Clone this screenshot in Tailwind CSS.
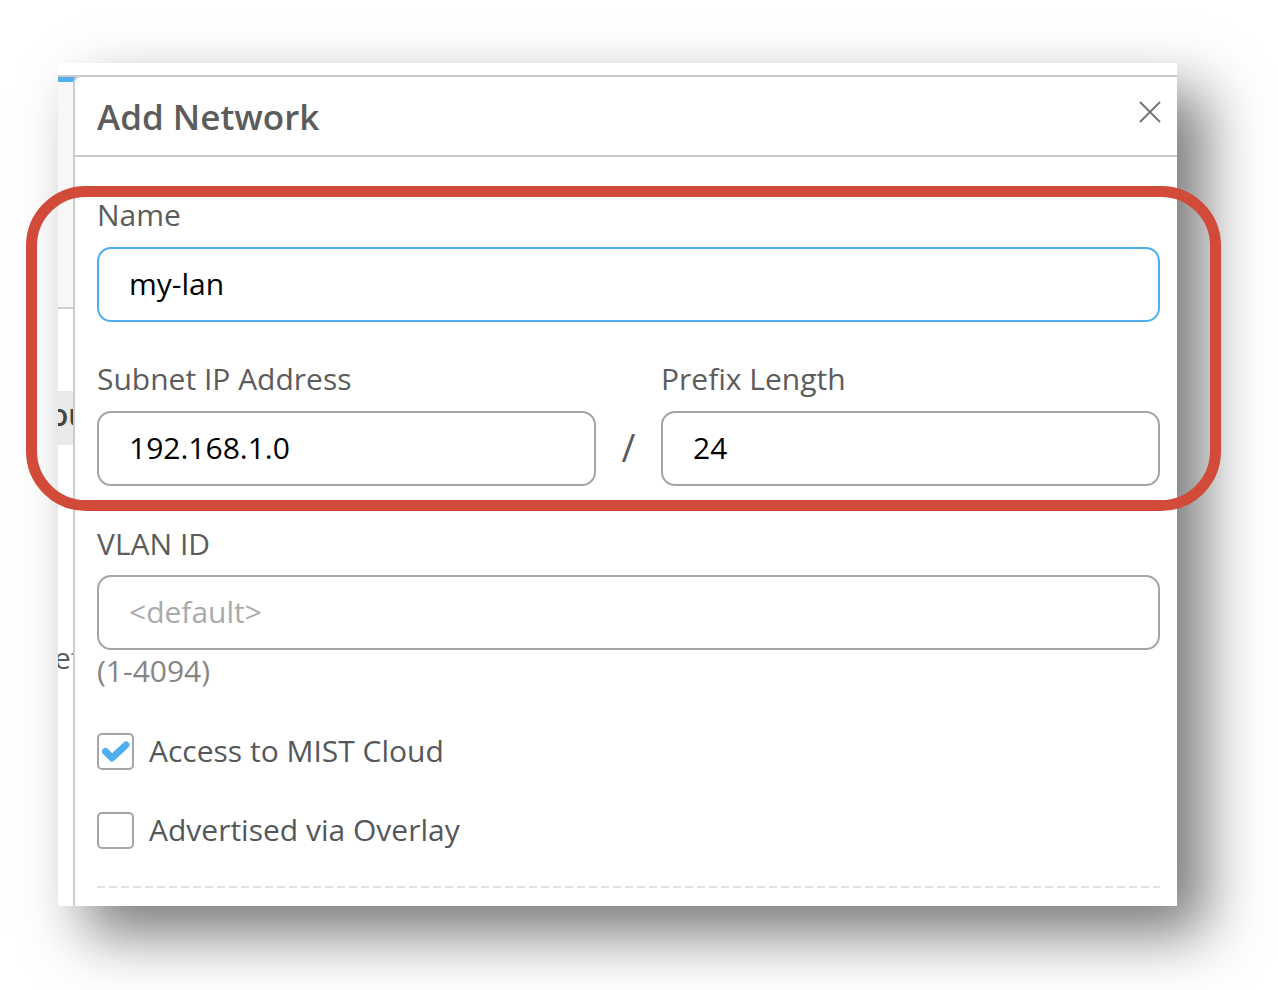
<!DOCTYPE html>
<html lang="en">
<head>
<meta charset="utf-8">
<meta name="viewport" content="width=device-width, initial-scale=1">
<title>Add Network</title>
<script src="https://cdn.jsdelivr.net/npm/@tailwindcss/browser@4"></script>
</head>
<body class="overflow-x-hidden bg-white pt-[63px] pr-[101px] pb-[84px] pl-[58px] font-['Open_Sans',sans-serif] text-[30px] leading-10 text-[#5c5c5c]">
<main class="bg-white pt-3 shadow-[28px_28px_56px_rgba(0,0,0,0.53)]">
  <div class="flex border-t-2 border-[#cccccc]">
    <!-- Edge of the page behind the dialog -->
    <div aria-hidden="true" class="-mr-[3px] flex w-[18px] shrink-0 flex-col overflow-hidden whitespace-nowrap">
      <div class="h-[230px] shrink-0 border-t-5 border-[#50aeee] bg-[#f7f7f7]"></div>
      <div class="h-0.5 shrink-0 bg-[#d0d0d0]"></div>
      <div class="mt-[82px] h-[54px] bg-[#e9e9eb] leading-[48px] font-semibold text-[#444444]"><span class="-ml-2">ou</span></div>
      <div class="mt-[193px] font-medium"><span class="-ml-1">et</span></div>
    </div>

    <section aria-labelledby="title" class="relative -mt-0.5 min-w-0 grow rounded-tl-lg border-t-2 border-l-2 border-[#cccccc] bg-white">
      <header class="flex items-center justify-between border-b-2 border-[#cccccc] pr-4 pl-[22px]">
        <h1 id="title" class="pt-5 pb-[18px] text-[35px] leading-10 font-semibold">Add Network</h1>
        <button type="button" aria-label="Close" class="mb-2 text-[#707476]">
          <svg class="size-[22px]" viewBox="0 0 22 22" fill="none" stroke="currentColor" stroke-width="1.8"><path d="M1 1 21 21M21 1 1 21"/></svg>
        </button>
      </header>

      <form class="pt-[38px] pr-[17px] pb-[18px] pl-[22px]">
        <div class="relative">
          <div class="flex flex-col gap-3">
            <label for="name">Name</label>
            <input id="name" type="text" value="my-lan" class="h-[75px] w-full rounded-[14px] border-2 border-[#50aeee] px-[30px] pb-0.5 text-black outline-none">
          </div>
          <div class="mt-[37px] flex items-end">
            <div class="flex min-w-0 flex-1 flex-col gap-3">
              <label for="subnet">Subnet IP Address</label>
              <input id="subnet" type="text" value="192.168.1.0" class="h-[75px] w-full rounded-[14px] border-2 border-[#a3a5a6] px-[30px] pb-0.5 text-black outline-none">
            </div>
            <span class="w-[65px] text-center text-[38px] leading-[78px]">/</span>
            <div class="flex min-w-0 flex-1 flex-col gap-3">
              <label for="prefix">Prefix Length</label>
              <input id="prefix" type="text" value="24" class="h-[75px] w-full rounded-[14px] border-2 border-[#a3a5a6] px-[30px] pb-0.5 text-black outline-none">
            </div>
          </div>
          <!-- Highlight around the required fields -->
          <div class="pointer-events-none absolute -top-[9px] -right-[61px] -bottom-[25px] -left-[71px] rounded-[60px] border-11 border-[#d24b3a]"></div>
        </div>

        <div class="mt-[38px] flex flex-col gap-[11px]">
          <label for="vlan">VLAN ID</label>
          <input id="vlan" type="text" placeholder="&lt;default&gt;" aria-describedby="vlan-hint" class="h-[75px] w-full rounded-[14px] border-2 border-[#a3a5a6] px-[30px] pb-0.5 text-black outline-none placeholder:text-[#a9abab]">
        </div>
        <p id="vlan-hint" class="pt-px text-[#858585]">(1-4094)</p>

        <div class="mt-10 flex flex-col gap-[39px] text-[#55585a]">
          <label class="flex items-center gap-[15px]">
            <span class="grid size-[37px] shrink-0">
              <input type="checkbox" checked class="peer col-start-1 row-start-1 appearance-none rounded-[5px] border-2 border-[#a3a5a6]">
              <svg class="pointer-events-none invisible col-start-1 row-start-1 peer-checked:visible" viewBox="0 0 37 37" fill="none" stroke="#50aeee" stroke-width="7" stroke-linecap="round" stroke-linejoin="round"><path d="M8.5 18.5 15 25 29 12"/></svg>
            </span>
            Access to MIST Cloud
          </label>
          <label class="flex items-center gap-[15px]">
            <span class="grid size-[37px] shrink-0">
              <input type="checkbox" class="peer col-start-1 row-start-1 appearance-none rounded-[5px] border-2 border-[#a3a5a6]">
              <svg class="pointer-events-none invisible col-start-1 row-start-1 peer-checked:visible" viewBox="0 0 37 37" fill="none" stroke="#50aeee" stroke-width="7" stroke-linecap="round" stroke-linejoin="round"><path d="M8.5 18.5 15 25 29 12"/></svg>
            </span>
            Advertised via Overlay
          </label>
        </div>
        <hr class="mt-9 h-0.5 border-0 bg-[repeating-linear-gradient(90deg,#e2e2e2_0_8px,transparent_8px_12px)]">
      </form>
    </section>
  </div>
</main>
</body>
</html>
